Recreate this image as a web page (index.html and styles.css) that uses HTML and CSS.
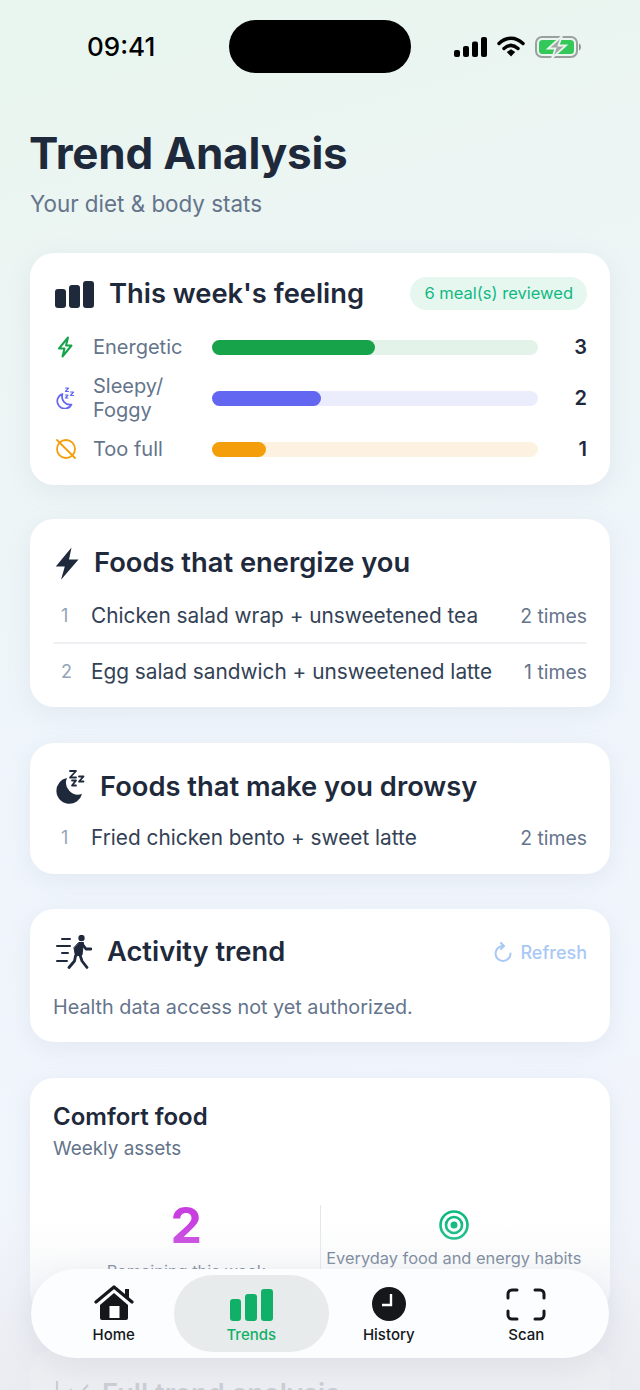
FILE: index.html
```html
<!DOCTYPE html>
<html>
<head>
    <title>Trend Analysis</title>
    <link rel="stylesheet" href="styles.css">
</head>
<body>
    <div class="screen">
        <div class="statusBar">
            <div class="clock">09:41</div>
            <div class="island"></div>
            <div class="statusIcons">
                <svg width="33" height="20" viewBox="0 0 33 20"><rect x="0" y="13" width="6" height="7" rx="2"/><rect x="9" y="9" width="6" height="11" rx="2"/><rect x="18" y="4.500" width="6" height="15.500" rx="2"/><rect x="27" y="0" width="6" height="20" rx="2"/></svg>
                <svg width="28" height="21" viewBox="0 0 28 21"><path d="M2 7.500C9.500 .5 18.500 .5 26 7.500" fill="none" stroke="#000" stroke-width="3.400" stroke-linecap="round"/><path d="M7 12.500C11.500 8.500 16.500 8.500 21 12.500" fill="none" stroke="#000" stroke-width="3.400" stroke-linecap="round"/><path d="M9.800 16L14 13.300 18.200 16 14 20.500Z"/></svg>
                <svg width="46" height="22" viewBox="0 0 46 22"><rect x="1" y="1" width="41" height="20" rx="6" fill="none" stroke="#9aa19d" stroke-width="2"/><rect x="4" y="4" width="35" height="14" rx="3.500" fill="#34c759"/><path d="M44 7.500c2.500 .5 2.500 6.500 0 7z" fill="#8b918e"/><path d="M27 0L13 12.500h7.500L17 22l14-12.500h-7.500z" fill="#a3a8a6" stroke="#e9f4ee" stroke-width="1.800"/></svg>
            </div>
        </div>

        <div class="pageHeader">
            <h1>Trend Analysis</h1>
            <p>Your diet &amp; body stats</p>
        </div>

        <div class="card feelingCard">
            <div class="cardTitle">
                <svg class="titleIcon" width="39" height="27" viewBox="0 0 39 27" fill="#1e293b"><rect x="0" y="8" width="11" height="19" rx="3"/><rect x="14" y="4" width="11" height="23" rx="3"/><rect x="28" y="0" width="11" height="27" rx="3"/></svg>
                <h2>This week's feeling</h2>
                <span class="chip">6 meal(s) reviewed</span>
            </div>
            <div class="feelRows">
                <div class="feelRow">
                    <svg width="20" height="22" viewBox="0 0 20 22" fill="none" stroke="#16a34a" stroke-width="2" stroke-linejoin="round"><path d="M13 1.500L4 12.500h5.500L7.500 20.500 16.500 9.500H11z"/></svg>
                    <span class="feelLabel">Energetic</span>
                    <div class="track greenTrack"><div class="fill greenFill" style="width: 50%"></div></div>
                    <span class="feelCount">3</span>
                </div>
                <div class="feelRow">
                    <svg width="20" height="22" viewBox="0 0 20 22" fill="none" stroke="#6366f1" stroke-width="1.700" stroke-linejoin="round" stroke-linecap="round"><path d="M7.500 7a7.500 7.500 0 1 0 9 10.500 8 8 0 0 1-9-10.500z"/><path d="M10.500 1h3l-3 3.500h3M15.500 5h3l-3 3.500h3M10.500 8h2.500l-2.500 3h2.500" stroke-width="1.200"/></svg>
                    <span class="feelLabel">Sleepy/<br>Foggy</span>
                    <div class="track blueTrack"><div class="fill blueFill" style="width: 33.400%"></div></div>
                    <span class="feelCount">2</span>
                </div>
                <div class="feelRow">
                    <svg width="22" height="22" viewBox="0 0 22 22" fill="none" stroke="#f59e0b" stroke-width="1.800" stroke-linecap="round"><circle cx="11" cy="11" r="9"/><path d="M2 2l18 18"/></svg>
                    <span class="feelLabel">Too full</span>
                    <div class="track orangeTrack"><div class="fill orangeFill" style="width: 16.600%"></div></div>
                    <span class="feelCount">1</span>
                </div>
            </div>
        </div>

        <div class="card foodCard">
            <div class="cardTitle">
                <svg class="titleIcon" width="24" height="33" viewBox="0 0 24 33" fill="#1e293b"><path d="M16.500 .5L.8 19.500h9L6 32.800 23.500 12.500h-9.500z"/></svg>
                <h2>Foods that energize you</h2>
            </div>
            <div class="foodList">
                <div class="foodRow dividerRow">
                    <span class="foodNum">1</span>
                    <span class="foodName">Chicken salad wrap + unsweetened tea</span>
                    <span class="foodTimes">2 times</span>
                </div>
                <div class="foodRow">
                    <span class="foodNum">2</span>
                    <span class="foodName">Egg salad sandwich + unsweetened latte</span>
                    <span class="foodTimes">1 times</span>
                </div>
            </div>
        </div>

        <div class="card foodCard drowsyCard">
            <div class="cardTitle">
                <svg class="titleIcon" width="30" height="34" viewBox="0 0 30 34" fill="#1e293b"><path d="M12 8A13 13 0 1 0 27 24 12 12 0 0 1 12 8z"/><path d="M15 1h6l-6 6.500h6M24 6.500h4.500L24 11.500h4.500M17 10.500h4l-4 5h4" fill="none" stroke="#1e293b" stroke-width="1.800" stroke-linejoin="round" stroke-linecap="round"/></svg>
                <h2>Foods that make you drowsy</h2>
            </div>
            <div class="foodList">
                <div class="foodRow">
                    <span class="foodNum">1</span>
                    <span class="foodName">Fried chicken bento + sweet latte</span>
                    <span class="foodTimes">2 times</span>
                </div>
            </div>
        </div>

        <div class="card activityCard">
            <div class="cardTitle">
                <svg class="titleIcon" width="37" height="34" viewBox="0 0 37 34" fill="none" stroke="#1e293b" stroke-width="2" stroke-linecap="round" stroke-linejoin="round"><circle cx="26.500" cy="3" r="3.200" fill="#1e293b" stroke="none"/><path d="M7 4h8M2 11h13M7 18h6M2 26h10"/><path d="M24 7.500h4.500L27 20l-6.500 1-1.500-8z" fill="#1e293b" stroke-width="1"/><path d="M28 10l3 4h5M20.500 21l-1 5-5.500 6.500M25 20l2 6 5 6.500" stroke-width="2.800"/></svg>
                <h2>Activity trend</h2>
                <span class="refresh">
                    <svg width="18" height="20" viewBox="0 0 18 20" fill="none" stroke="#a9c8f5" stroke-width="2" stroke-linecap="round" stroke-linejoin="round"><path d="M9 4A7.500 7.500 0 1 0 16.500 11.500"/><path d="M7 1l3 3-3 3"/></svg>
                    Refresh
                </span>
            </div>
            <p class="healthNote">Health data access not yet authorized.</p>
        </div>

        <div class="card comfortCard">
            <h3>Comfort food</h3>
            <div class="subTitle">Weekly assets</div>
            <div class="assets">
                <div class="assetCol">
                    <div class="bigNum">2</div>
                    <div class="assetLabel lowLabel">Remaining this week</div>
                </div>
                <div class="assetCol rightCol">
                    <svg width="30" height="30" viewBox="0 0 30 30" fill="none" stroke="#10b981"><circle cx="15" cy="15" r="13.500" stroke-width="2.600"/><circle cx="15" cy="15" r="8" stroke-width="2.600"/><circle cx="15" cy="15" r="3.500" fill="#10b981" stroke="none"/></svg>
                    <div class="assetLabel">Everyday food and energy habits</div>
                </div>
            </div>
        </div>

        <div class="card foodCard">
            <div class="cardTitle">
                <svg class="titleIcon" width="36" height="26" viewBox="0 0 36 26" fill="none" stroke="#1e293b" stroke-width="2.200"><path d="M2 0v24h32M8 18l8-9 7 6 10-11"/></svg>
                <h2 class="fullTitle">Full trend analysis</h2>
            </div>
        </div>

        <div class="fade"></div>
        <div class="tabBar">
            <div class="tab">
                <svg width="40" height="36" viewBox="0 0 40 36" fill="#15171a"><path d="M6 20L20 8l14 12v13a2 2 0 0 1-2 2H8a2 2 0 0 1-2-2z"/><rect x="15.500" y="21" width="10" height="12" fill="#fff"/><path d="M2 17L20 2l18 15" fill="none" stroke="#15171a" stroke-width="3.200" stroke-linecap="round" stroke-linejoin="round"/><rect x="31" y="4" width="4" height="9"/></svg>
                <span>Home</span>
            </div>
            <div class="tab activeTab">
                <svg width="43" height="32" viewBox="0 0 43 32" fill="#10b069"><rect x="0" y="10" width="11" height="22" rx="3"/><rect x="15" y="5" width="12" height="27" rx="3"/><rect x="31" y="0" width="12" height="32" rx="3"/></svg>
                <span>Trends</span>
            </div>
            <div class="tab">
                <svg width="34" height="34" viewBox="0 0 34 34"><circle cx="17" cy="17" r="17" fill="#15171a"/><path d="M19 7v11h-9" fill="none" stroke="#fff" stroke-width="2.400"/></svg>
                <span>History</span>
            </div>
            <div class="tab">
                <svg width="40" height="33" viewBox="0 0 40 33" fill="none" stroke="#15171a" stroke-width="3" stroke-linecap="round"><path d="M2 10V6a4 4 0 0 1 4-4h5M29 2h5a4 4 0 0 1 4 4v4M38 23v4a4 4 0 0 1-4 4h-5M11 31H6a4 4 0 0 1-4-4v-4"/></svg>
                <span>Scan</span>
            </div>
        </div>
    </div>
</body>
</html>
```

FILE: styles.css
```css
html, body {
    margin: 0;
    padding: 0;
}
body {
    font-family: 'Inter', 'Liberation Sans', sans-serif;
    color: #1e293b;
}
.screen {
    position: relative;
    width: 640px;
    height: 1390px;
    overflow: hidden;
    padding: 0 30px;
    box-sizing: border-box;
    background: linear-gradient(165deg, #e8f5ee 0%, #ecf5f3 20%, #eff5fb 50%, #f1f5fc 75%, #f1f4f9 100%);
}

/* status bar */
.statusBar {
    height: 53px;
    padding-top: 20px;
    display: flex;
    align-items: center;
    justify-content: space-between;
}
.clock {
    width: 199px;
    padding-left: 57px;
    box-sizing: border-box;
    font-size: 26px;
    font-weight: 500;
    color: #000;
}
.island {
    width: 182px;
    height: 53px;
    border-radius: 27px;
    background: #000;
}
.statusIcons {
    width: 199px;
    padding-left: 43px;
    box-sizing: border-box;
    display: flex;
    align-items: center;
    gap: 10px;
}

/* heading */
.pageHeader {
    margin-top: 52px;
    margin-bottom: 34px;
}
h1 {
    margin: 0 0 0 -1px;
    font-size: 44px;
    line-height: 56px;
    font-weight: 700;
    letter-spacing: -0.2px;
    color: #1e293b;
}
.pageHeader p {
    margin: 8px 0 0;
    font-size: 22.400px;
    line-height: 30px;
    color: #64748b;
}

/* cards */
.card {
    background: #fff;
    border-radius: 24px;
    padding: 0 23px;
    box-shadow: 0 6px 24px rgba(148, 163, 184, 0.14);
    margin-bottom: 35px;
}
.cardTitle {
    display: flex;
    align-items: center;
}
.titleIcon {
    margin-left: 2px;
    flex-shrink: 0;
}
h2 {
    margin: 0 0 0 15px;
    font-size: 27.300px;
    line-height: 36px;
    font-weight: 600;
    color: #1e293b;
}
.chip {
    margin-left: auto;
    margin-top: -2px;
    height: 33px;
    line-height: 33px;
    padding: 0 14px;
    border-radius: 17px;
    background: #e6f7f0;
    color: #10b981;
    font-size: 16.500px;
}

/* feeling card */
.feelingCard {
    height: 232px;
    padding-top: 23px;
    box-sizing: border-box;
    margin-bottom: 34px;
}
.feelRows {
    margin-top: 20px;
}
.feelRow {
    display: grid;
    grid-template-columns: 38px 119px 326px 1fr;
    align-items: center;
    padding-left: 2px;
    margin-bottom: 12px;
    min-height: 30px;
}
.feelLabel {
    font-size: 20px;
    line-height: 24px;
    color: #64748b;
}
.feelCount {
    text-align: right;
    font-size: 20px;
    font-weight: 600;
    color: #1e293b;
}
.track {
    height: 15px;
    border-radius: 8px;
}
.fill {
    height: 100%;
    border-radius: 8px;
}
.greenTrack { background: #e3f3e9; }
.greenFill { background: #16a34a; }
.blueTrack { background: #ebedfc; }
.blueFill { background: #6366f1; }
.orangeTrack { background: #fdf1e1; }
.orangeFill { background: #f59e0b; }

/* food lists */
.foodCard {
    padding-top: 26px;
    padding-bottom: 9px;
    margin-bottom: 36px;
}
.foodList {
    margin-top: 7px;
}
.foodRow {
    display: flex;
    align-items: center;
    padding: 15px 0 13px;
    font-size: 20.800px;
    line-height: 26px;
}
.dividerRow {
    border-bottom: 2px solid #eef0f3;
}
.foodNum {
    width: 38px;
    padding-left: 8px;
    box-sizing: border-box;
    font-size: 18px;
    color: #94a3b8;
}
.foodName {
    color: #334155;
}
.foodTimes {
    margin-left: auto;
    font-size: 19.400px;
    color: #64748b;
}
.drowsyCard {
    padding-bottom: 10px;
    margin-bottom: 35px;
}
.drowsyCard .foodList {
    margin-top: 5px;
}

/* activity */
.activityCard {
    padding-top: 25px;
    padding-bottom: 22px;
    margin-bottom: 36px;
}
.refresh {
    margin-left: auto;
    display: flex;
    align-items: center;
    gap: 8px;
    font-size: 18px;
    font-weight: 500;
    color: #a9c8f5;
}
.healthNote {
    margin: 24px 0 0;
    font-size: 19.800px;
    line-height: 26px;
    color: #64748b;
}

/* comfort food */
.comfortCard {
    height: 237px;
    padding-top: 24px;
    box-sizing: border-box;
}
h3 {
    margin: 0;
    font-size: 24px;
    line-height: 30px;
    font-weight: 600;
}
.subTitle {
    margin-top: 5px;
    font-size: 18.900px;
    line-height: 24px;
    color: #64748b;
}
.assets {
    display: flex;
    margin-top: 44px;
}
.assetCol {
    flex: 1;
    display: flex;
    flex-direction: column;
    align-items: center;
}
.rightCol {
    border-left: 1px solid #e2e8f0;
    padding-top: 5px;
    height: 100px;
}
.bigNum {
    font-size: 50px;
    line-height: 40px;
    font-weight: 700;
    color: #c83ee0;
}
.assetLabel {
    margin-top: 7px;
    font-size: 16.400px;
    line-height: 22px;
    color: #64748b;
    white-space: nowrap;
}
.lowLabel {
    margin-top: 15px;
}
h2.fullTitle {
    margin-left: 11px;
}

/* bottom tabs */
.fade {
    position: absolute;
    left: 0;
    right: 0;
    bottom: 0;
    height: 170px;
    background: linear-gradient(to bottom, rgba(233, 235, 240, 0) 0%, rgba(233, 235, 240, 0.3) 30%, rgba(233, 235, 240, 0.85) 85%);
}
.tabBar {
    position: absolute;
    left: 31px;
    top: 1269px;
    width: 578px;
    height: 89px;
    padding: 6px 14px;
    box-sizing: border-box;
    display: grid;
    grid-template-columns: repeat(4, 137.500px);
    border-radius: 45px;
    background: #fbfdfe;
    box-shadow: 0 8px 30px rgba(100, 116, 139, 0.12);
}
.tab {
    display: flex;
    flex-direction: column;
    align-items: center;
    justify-content: flex-end;
    padding-bottom: 8px;
    gap: 4px;
    font-size: 15px;
    font-weight: 500;
    color: #15171a;
}
.activeTab {
    margin: 0 -9px;
    border-radius: 39px;
    background: #e8ebec;
    color: #10b069;
}
```
